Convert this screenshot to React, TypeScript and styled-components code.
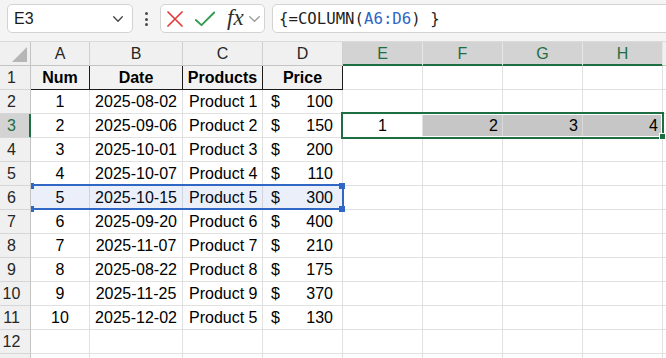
import React from "react";
import styled, { createGlobalStyle, css } from "styled-components";

const GREEN = "#1d6f42";
const BLUE = "#3066c4";

const GlobalStyle = createGlobalStyle`
  html, body { margin: 0; padding: 0; background: #fff; overflow: hidden; }
  body { font-family: "Liberation Sans", Arial, sans-serif; }
  * { box-sizing: border-box; }
`;

const Page = styled.div`
  width: 666px;
  height: 358px;
  overflow: hidden;
  display: flex;
  flex-direction: column;
  background: #fff;
`;

const Toolbar = styled.div`
  flex: none;
  height: 42px;
  display: flex;
  align-items: flex-start;
  padding: 4px 0 0 7px;
  background: #f4f4f4;
  border-bottom: 1px solid #dadada;
`;

const Box = styled.div`
  height: 29px;
  background: #fff;
  border: 1px solid #d3d3d3;
  border-radius: 5px;
  display: flex;
  align-items: center;
`;

const NameBox = styled(Box)`
  width: 126px;
  justify-content: space-between;
  padding: 0 9px 0 6px;
  font-size: 16px;
  color: #1b1b1b;
`;

const Dots = styled.div`
  width: 27px;
  height: 29px;
  display: flex;
  flex-direction: column;
  align-items: center;
  justify-content: center;
  gap: 2.5px;
  padding-top: 1px;
`;

const Dot = styled.span`
  width: 3px;
  height: 3px;
  border-radius: 50%;
  background: #4a4a4a;
`;

const FxBox = styled(Box)`
  width: 105px;
  padding-left: 6px;
`;

const FxLabel = styled.span`
  font-family: "Liberation Serif", "Times New Roman", serif;
  font-style: italic;
  font-size: 23px;
  color: #2e2e2e;
  margin-left: 12px;
  margin-top: -3px;
  line-height: 1;
`;

const Spacer = styled.span<{ $w: number }>`
  display: inline-block;
  width: ${(p) => p.$w}px;
  flex: none;
`;

const FormulaBox = styled(Box)`
  flex: 1;
  margin-left: 7px;
  margin-right: -10px;
  padding-left: 6px;
  font-family: "DejaVu Sans Mono", "Liberation Mono", monospace;
  font-size: 15.7px;
  color: #1f1f1f;
  white-space: pre;
`;

const Ref = styled.span`
  color: ${BLUE};
`;

const Sheet = styled.div`
  display: grid;
  grid-template-columns: 31px 59px 93px 80px 80px 80px 80px 80px 80px 1fr;
  grid-template-rows: repeat(14, 24px);
  font-size: 16px;
  color: #000;
`;

const Corner = styled.div`
  position: relative;
  z-index: 4;
  background: #f0f0f0;
  border-right: 1px solid #c4c4c4;
  border-bottom: 1px solid #c4c4c4;
  &::after {
    content: "";
    position: absolute;
    right: 3px;
    bottom: 3px;
    width: 15px;
    height: 15px;
    background: #b6b6b6;
    clip-path: polygon(100% 0, 100% 100%, 0 100%);
  }
`;

const ColHeader = styled.div<{ $selected?: boolean }>`
  display: flex;
  align-items: center;
  justify-content: center;
  background: #f0f0f0;
  color: #262626;
  border-right: 1px solid #cfcfcf;
  border-bottom: 1px solid #c4c4c4;
  ${(p) =>
    p.$selected &&
    css`
      background: #d3d3d3;
      color: ${GREEN};
      border-right-color: #e6e6e6;
      border-bottom-color: ${GREEN};
      box-shadow: inset 0 -1px 0 ${GREEN};
    `}
`;

const RowHeader = styled.div<{ $selected?: boolean }>`
  position: relative;
  z-index: 4;
  display: flex;
  align-items: center;
  justify-content: center;
  padding-right: 7px;
  background: #f0f0f0;
  color: #262626;
  border-right: 1px solid #c4c4c4;
  border-bottom: 1px solid #d6d6d6;
  ${(p) =>
    p.$selected &&
    css`
      background: #d3d3d3;
      color: ${GREEN};
      border-right-color: ${GREEN};
      box-shadow: inset -1px 0 0 ${GREEN};
    `}
`;

const Cell = styled.div<{ $title?: boolean; $shade?: boolean }>`
  position: relative;
  display: flex;
  align-items: center;
  justify-content: center;
  padding: 0 4px;
  white-space: nowrap;
  background: ${(p) => (p.$title ? "#f2f2f2" : p.$shade ? "#c6c6c6" : "#fff")};
  border-right: 1px solid ${(p) => (p.$title ? "#1b1b1b" : p.$shade ? "#dadada" : "#e1e1e1")};
  border-bottom: 1px solid ${(p) => (p.$title ? "#1b1b1b" : "#e1e1e1")};
  font-weight: ${(p) => (p.$title ? 700 : 400)};
`;

const TextCell = styled(Cell)`
  justify-content: flex-start;
  padding-left: 6px;
`;

const ValueCell = styled(Cell)`
  justify-content: flex-end;
  padding-right: 4px;
`;

const PriceCell = styled(Cell)`
  justify-content: space-between;
  padding: 0 9px 0 8px;
`;

const RangeOutline = styled.div<{ $tone: "green" | "blue" }>`
  position: absolute;
  top: -2px;
  left: -2px;
  z-index: 3;
  pointer-events: none;
  border: 2px solid ${(p) => (p.$tone === "green" ? GREEN : BLUE)};
  ${(p) =>
    p.$tone === "green"
      ? css`
          width: 323px;
          height: 27px;
          box-shadow: inset 0 0 0 1px #fff;
        `
      : css`
          width: 315px;
          height: 26px;
          background: rgba(48, 102, 196, 0.1);
        `}
`;

const FillHandle = styled.span`
  position: absolute;
  right: -4px;
  bottom: -3px;
  width: 7px;
  height: 7px;
  background: ${GREEN};
  border: 1px solid #fff;
`;

const RefHandle = styled.span<{ $v: "top" | "bottom"; $h: "left" | "right" }>`
  position: absolute;
  width: 6px;
  height: 6px;
  background: ${BLUE};
  ${(p) => (p.$v === "top" ? "top: -3px;" : "bottom: -4px;")}
  ${(p) => (p.$h === "left" ? "left: -3px;" : "right: -3px;")}
`;

const Chevron = ({ color, w, h }: { color: string; w: number; h: number }) => (
  <svg width={w} height={h} viewBox={`0 0 ${w} ${h}`} fill="none">
    <polyline
      points={`0.7,0.7 ${w / 2},${h - 0.7} ${w - 0.7},0.7`}
      stroke={color}
      strokeWidth="1.3"
      strokeLinecap="round"
      strokeLinejoin="round"
    />
  </svg>
);

const CancelIcon = () => (
  <svg width="16" height="16" viewBox="0 0 16 16" fill="none" style={{ marginTop: 1 }}>
    <path d="M1 1 L15 15 M15 1 L1 15" stroke="#e23d3d" strokeWidth="1.7" strokeLinecap="round" />
  </svg>
);

const CheckIcon = () => (
  <svg width="20" height="16" viewBox="0 0 20 16" fill="none" style={{ marginTop: 1 }}>
    <polyline
      points="0.8,9 6.5,14.2 19.2,1.5"
      stroke="#2f9a4e"
      strokeWidth="1.8"
      strokeLinecap="round"
      strokeLinejoin="round"
    />
  </svg>
);

type Row = [number, string, string, number];

const data: Row[] = [
  [1, "2025-08-02", "Product 1", 100],
  [2, "2025-09-06", "Product 2", 150],
  [3, "2025-10-01", "Product 3", 200],
  [4, "2025-10-07", "Product 4", 110],
  [5, "2025-10-15", "Product 5", 300],
  [6, "2025-09-20", "Product 6", 400],
  [7, "2025-11-07", "Product 7", 210],
  [8, "2025-08-22", "Product 8", 175],
  [9, "2025-11-25", "Product 9", 370],
  [10, "2025-12-02", "Product 5", 130],
];

const columns = ["A", "B", "C", "D", "E", "F", "G", "H"];
const selectedCols = new Set(["E", "F", "G", "H"]);

export default function App() {
  const rows: React.ReactNode[] = [];

  for (let r = 1; r <= 13; r++) {
    const cells: React.ReactNode[] = [];
    cells.push(
      <RowHeader key={`rh${r}`} $selected={r === 3}>
        {r <= 12 ? r : null}
      </RowHeader>
    );

    if (r === 1) {
      cells.push(<Cell key="a" $title>Num</Cell>);
      cells.push(<Cell key="b" $title>Date</Cell>);
      cells.push(<Cell key="c" $title>Products</Cell>);
      cells.push(<Cell key="d" $title>Price</Cell>);
    } else if (r <= 11) {
      const [n, date, prod, price] = data[r - 2];
      cells.push(
        <Cell key="a">
          {n}
          {r === 6 && (
            <RangeOutline $tone="blue">
              <RefHandle $v="top" $h="left" />
              <RefHandle $v="bottom" $h="left" />
              <RefHandle $v="top" $h="right" />
              <RefHandle $v="bottom" $h="right" />
            </RangeOutline>
          )}
        </Cell>
      );
      cells.push(<Cell key="b">{date}</Cell>);
      cells.push(<TextCell key="c">{prod}</TextCell>);
      cells.push(
        <PriceCell key="d">
          <span>$</span>
          <span>{price}</span>
        </PriceCell>
      );
    } else {
      ["a", "b", "c", "d"].forEach((k) => cells.push(<Cell key={k} />));
    }

    if (r === 3) {
      cells.push(
        <Cell key="e">
          1
          <RangeOutline $tone="green">
            <FillHandle />
          </RangeOutline>
        </Cell>
      );
      cells.push(<ValueCell key="f" $shade>2</ValueCell>);
      cells.push(<ValueCell key="g" $shade>3</ValueCell>);
      cells.push(<ValueCell key="h" $shade>4</ValueCell>);
    } else {
      ["e", "f", "g", "h"].forEach((k) => cells.push(<Cell key={k} />));
    }
    cells.push(<Cell key="x" />);
    rows.push(<React.Fragment key={`r${r}`}>{cells}</React.Fragment>);
  }

  return (
    <>
      <GlobalStyle />
      <Page>
        <Toolbar>
          <NameBox>
            <span>E3</span>
            <Chevron color="#444" w={10} h={6} />
          </NameBox>
          <Dots>
            <Dot />
            <Dot />
            <Dot />
          </Dots>
          <FxBox>
            <CancelIcon />
            <Spacer $w={12} />
            <CheckIcon />
            <FxLabel>fx</FxLabel>
            <Spacer $w={5} />
            <Chevron color="#9a9a9a" w={11} h={6} />
          </FxBox>
          <FormulaBox>
            {"{=COLUMN("}
            <Ref>A6:D6</Ref>
            {") }"}
          </FormulaBox>
        </Toolbar>
        <Sheet>
          <Corner />
          {columns.map((c) => (
            <ColHeader key={c} $selected={selectedCols.has(c)}>
              {c}
            </ColHeader>
          ))}
          <ColHeader />
          {rows}
        </Sheet>
      </Page>
    </>
  );
}
